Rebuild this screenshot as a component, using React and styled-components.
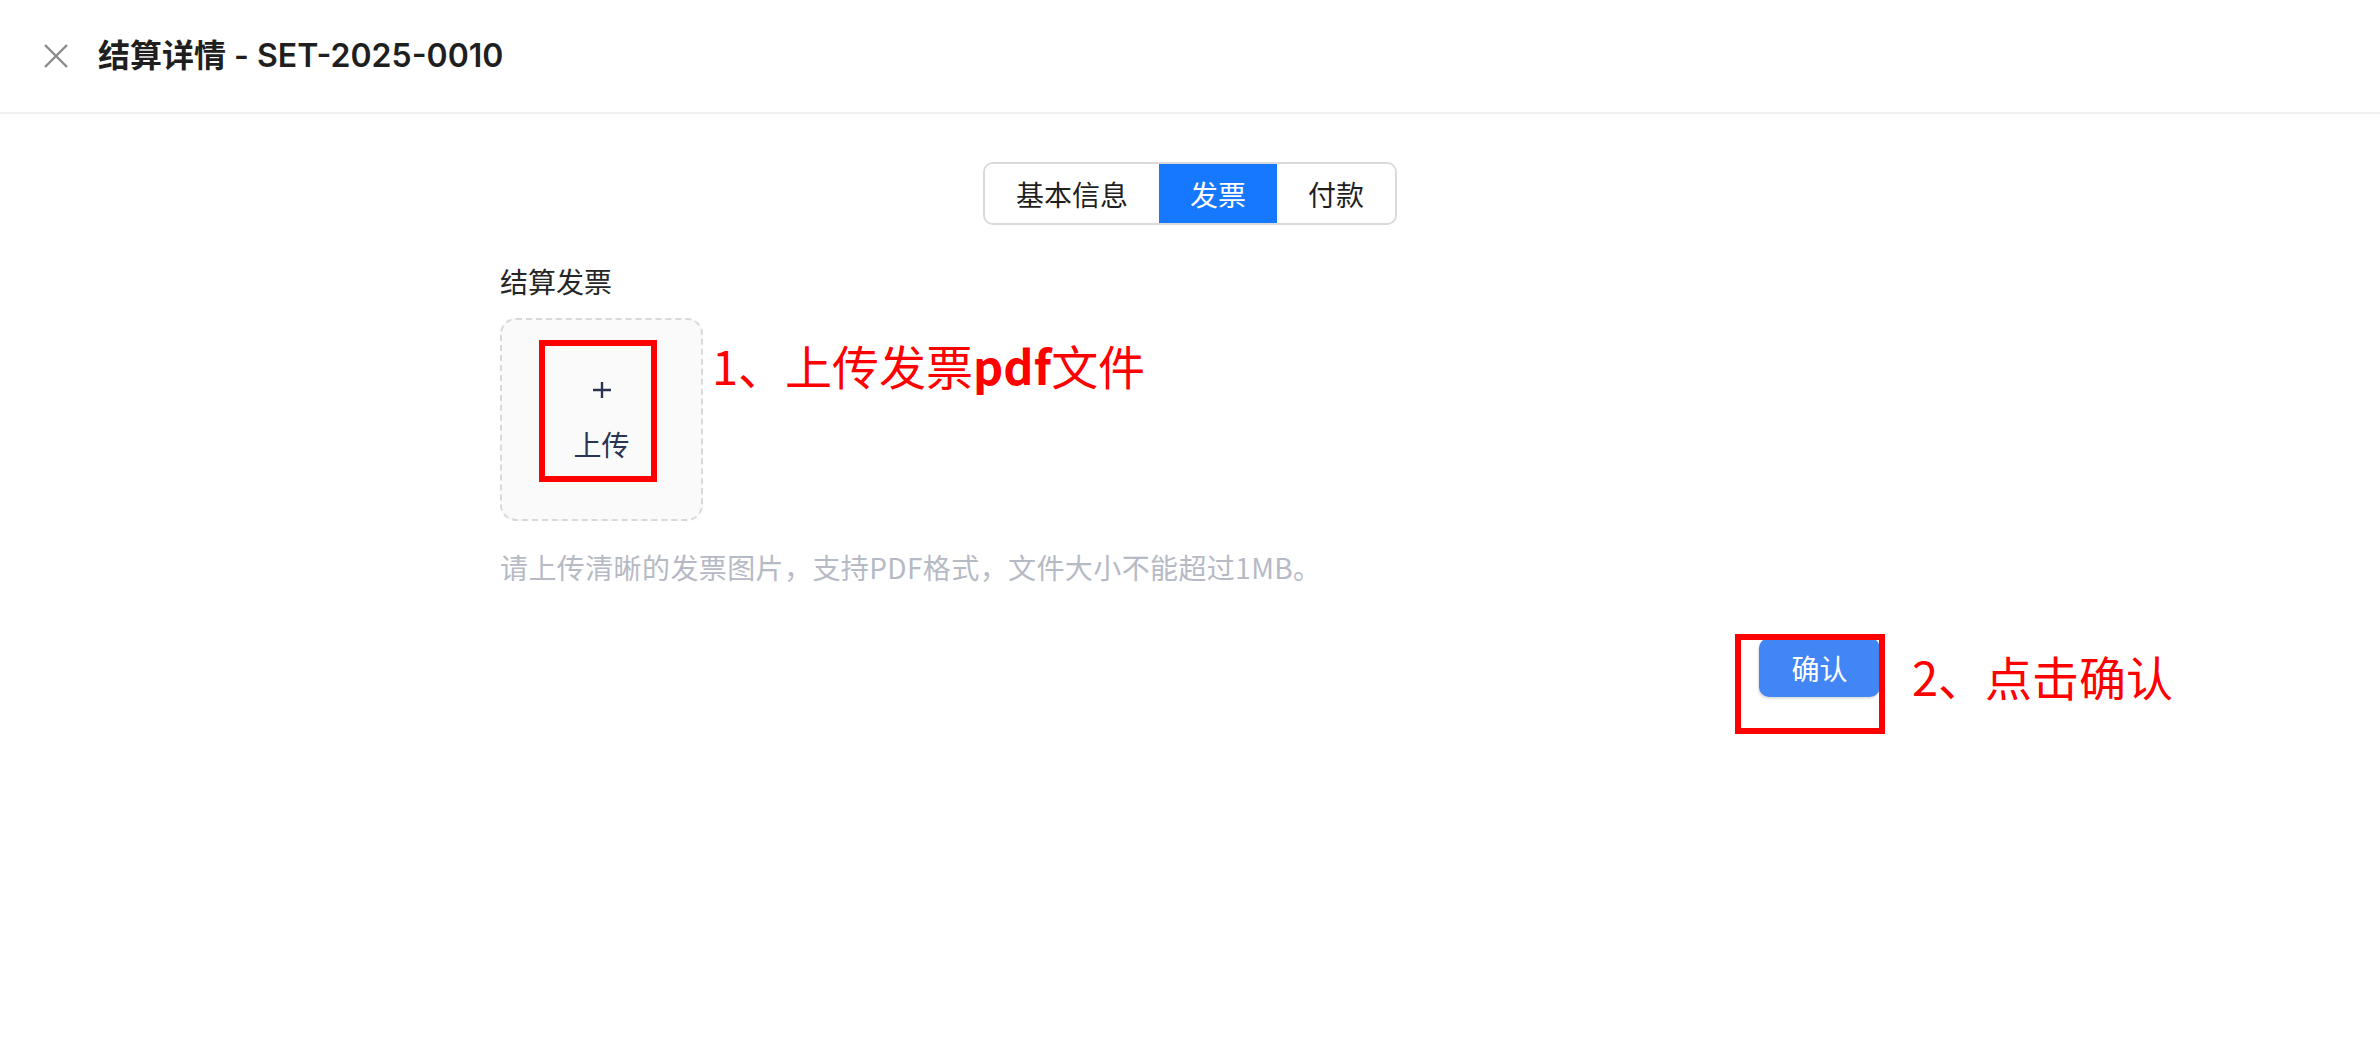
import React from "react"
import styled, { createGlobalStyle } from "styled-components"

const GlobalStyle = createGlobalStyle`
  html, body {
    margin: 0;
    padding: 0;
    background: #fff;
  }
  body {
    font-family: "Inter", "Noto Sans CJK SC", sans-serif;
    color: #1f1f1f;
  }
  * {
    box-sizing: border-box;
  }
`

const Page = styled.div`
  min-height: 100vh;
  background: #fff;
`

const Header = styled.header`
  height: 114px;
  display: flex;
  align-items: center;
  gap: 30px;
  padding: 0 0 0 44px;
  border-bottom: 2px solid #f0f0f0;
`

const CloseButton = styled.button`
  width: 24px;
  height: 24px;
  padding: 0;
  border: none;
  background: none;
  display: flex;
  cursor: pointer;
`

const Title = styled.h1`
  margin: 0;
  font-size: 32px;
  font-weight: 600;
  color: #1f1f1f;
  line-height: 40px;
`

const Content = styled.main`
  width: 1380px;
  margin: 0 auto;
  padding-top: 48px;
  display: flex;
  flex-direction: column;
`

const Tabs = styled.div`
  align-self: center;
  display: flex;
  height: 63px;
  border: 2px solid #d9d9d9;
  border-radius: 10px;
  overflow: hidden;
`

const Tab = styled.div`
  display: flex;
  align-items: center;
  padding: 0 31px;
  font-size: 28px;
  font-family: "Noto Sans CJK SC", sans-serif;
  color: ${p => (p.$active ? "#fff" : "#1f1f1f")};
  background: ${p => (p.$active ? "#1677ff" : "#fff")};
  margin: ${p => (p.$active ? "-2px 0" : "0")};
`

const FieldLabel = styled.div`
  margin-top: 36px;
  font-size: 28px;
  line-height: 40px;
  font-family: "Noto Sans CJK SC", sans-serif;
  color: #262626;
`

const UploadWrap = styled.div`
  position: relative;
  margin-top: 17px;
  width: 203px;
`

const UploadBox = styled.div`
  width: 203px;
  height: 203px;
  border: 2px dashed #d9d9d9;
  border-radius: 16px;
  background: #fafafa;
  display: flex;
  flex-direction: column;
  align-items: center;
  justify-content: center;
  gap: 28px;
  color: #2b3452;
  position: relative;
`

const UploadText = styled.div`
  font-size: 28px;
  line-height: 32px;
  font-family: "Noto Sans CJK SC", sans-serif;
  color: #2b3452;
`

const Hint = styled.div`
  margin-top: 26px;
  font-size: 28px;
  line-height: 40px;
  letter-spacing: 0.4px;
  font-family: "Noto Sans CJK SC", sans-serif;
  color: #b6bac5;
`

const ActionRow = styled.div`
  margin-top: 51px;
  display: flex;
  justify-content: flex-end;
`

const ConfirmWrap = styled.div`
  position: relative;
`

const PrimaryButton = styled.button`
  width: 121px;
  height: 59px;
  border: none;
  border-radius: 10px;
  background: #4285f4;
  color: #fff;
  font-size: 28px;
  font-family: "Noto Sans CJK SC", sans-serif;
  box-shadow: -1px 2px 2px rgba(0, 0, 0, 0.12);
  cursor: pointer;
  padding: 0;
`

const Marker = styled.div`
  position: absolute;
  left: ${p => p.$left}px;
  top: ${p => p.$top}px;
  width: ${p => p.$w}px;
  height: ${p => p.$h}px;
  border: 6px solid #ff0000;
  pointer-events: none;
`

const Note = styled.div`
  position: absolute;
  left: ${p => p.$left}px;
  top: ${p => p.$top}px;
  white-space: nowrap;
  font-family: "Noto Sans CJK SC", sans-serif;
  font-size: 47px;
  line-height: 54px;
  color: #ff0000;

  b {
    font-weight: 700;
  }
`

const CloseIcon = () => (
  <svg width="24" height="24" viewBox="0 0 24 24">
    <path d="M1 1 L23 23 M23 1 L1 23" stroke="#8a8a8a" strokeWidth="2.4" fill="none" />
  </svg>
)

const PlusIcon = () => (
  <svg width="20" height="20" viewBox="0 0 20 20">
    <path d="M10 2 V18 M1 10 H19" stroke="#2b3452" strokeWidth="2.4" fill="none" />
  </svg>
)

export default function App() {
  return (
    <Page>
      <GlobalStyle />
      <Header>
        <CloseButton aria-label="close">
          <CloseIcon />
        </CloseButton>
        <Title>结算详情 - SET-2025-0010</Title>
      </Header>
      <Content>
        <Tabs>
          <Tab>基本信息</Tab>
          <Tab $active>发票</Tab>
          <Tab>付款</Tab>
        </Tabs>
        <FieldLabel>结算发票</FieldLabel>
        <UploadWrap>
          <UploadBox>
            <PlusIcon />
            <UploadText>上传</UploadText>
          </UploadBox>
          <Marker $left={39} $top={22} $w={118} $h={142} />
          <Note $left={212} $top={20}>
            1、上传发票<b>pdf</b>文件
          </Note>
        </UploadWrap>
        <Hint>请上传清晰的发票图片，支持PDF格式，文件大小不能超过1MB。</Hint>
        <ActionRow>
          <ConfirmWrap>
            <PrimaryButton>确认</PrimaryButton>
            <Marker $left={-24} $top={-4} $w={150} $h={100} />
            <Note $left={153} $top={11}>2、点击确认</Note>
          </ConfirmWrap>
        </ActionRow>
      </Content>
    </Page>
  )
}
